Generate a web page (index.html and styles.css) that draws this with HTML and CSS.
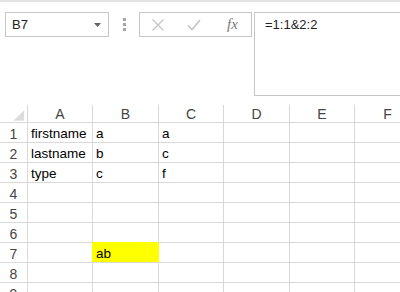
FILE: index.html
```html
<!DOCTYPE html>
<html>
<head>
<meta charset="utf-8">
<link rel="stylesheet" href="styles.css">
</head>
<body>
<div class="topband"></div>
<div class="toolbar">
  <div class="namebox">
    <span class="nb-text">B7</span>
    <svg class="nb-arrow" width="7" height="4" viewBox="0 0 7 4"><polygon points="0,0 7,0 3.5,4" fill="#666"/></svg>
  </div>
  <div class="dots">
    <span class="dot"></span><span class="dot"></span><span class="dot"></span>
  </div>
  <div class="fxbox">
    <svg class="ico" width="14" height="14" viewBox="0 0 14 14"><path d="M1.5 1.5 L12.5 12.5 M12.5 1.5 L1.5 12.5" stroke="#c4c4c4" stroke-width="1.3" fill="none"/></svg>
    <svg class="ico" width="14" height="14" viewBox="0 0 14 14"><path d="M1 7.5 L5 11.5 L13 2" stroke="#c4c4c4" stroke-width="1.6" fill="none"/></svg>
    <span class="fx">fx</span>
  </div>
  <div class="formula">=1:1&amp;2:2</div>
</div>
<div class="sheet">
  <div class="hd corner"><svg width="28" height="17" viewBox="0 0 28 17"><polygon points="25,5 25,16 14,16" fill="#dcdcdc"/></svg></div>
  <div class="hd">A</div><div class="hd">B</div><div class="hd">C</div><div class="hd">D</div><div class="hd">E</div><div class="hd">F</div>

  <div class="rh">1</div><div class="c">firstname</div><div class="c">a</div><div class="c">a</div><div class="c"></div><div class="c"></div><div class="c"></div>
  <div class="rh">2</div><div class="c">lastname</div><div class="c">b</div><div class="c">c</div><div class="c"></div><div class="c"></div><div class="c"></div>
  <div class="rh">3</div><div class="c">type</div><div class="c">c</div><div class="c">f</div><div class="c"></div><div class="c"></div><div class="c"></div>
  <div class="rh">4</div><div class="c"></div><div class="c"></div><div class="c"></div><div class="c"></div><div class="c"></div><div class="c"></div>
  <div class="rh">5</div><div class="c"></div><div class="c"></div><div class="c"></div><div class="c"></div><div class="c"></div><div class="c"></div>
  <div class="rh">6</div><div class="c"></div><div class="c"></div><div class="c"></div><div class="c"></div><div class="c"></div><div class="c"></div>
  <div class="rh">7</div><div class="c"></div><div class="c yellow">ab</div><div class="c"></div><div class="c"></div><div class="c"></div><div class="c"></div>
  <div class="rh">8</div><div class="c"></div><div class="c"></div><div class="c"></div><div class="c"></div><div class="c"></div><div class="c"></div>
  <div class="rh">9</div><div class="c"></div><div class="c"></div><div class="c"></div><div class="c"></div><div class="c"></div><div class="c"></div>
</div>
</body>
</html>
```
FILE: styles.css
```css
html, body {
  margin: 0;
  padding: 0;
  background: #fff;
  width: 400px;
  height: 292px;
  overflow: hidden;
  font-family: "Liberation Sans", Arial, sans-serif;
}
.topband {
  height: 2px;
  background: #e3e3e3;
}
.toolbar {
  display: flex;
  align-items: flex-start;
  padding-top: 10px;
  height: 93px;
  box-sizing: border-box;
  margin-bottom: 10px;
}
.namebox {
  margin-left: 5px;
  width: 104px;
  height: 25px;
  box-sizing: border-box;
  border: 1px solid #c6c6c6;
  display: flex;
  align-items: center;
  justify-content: space-between;
  padding: 0 7px 0 6px;
  font-size: 13px;
  color: #222;
}
.dots {
  width: 30px;
  height: 25px;
  display: flex;
  flex-direction: column;
  align-items: center;
  justify-content: center;
  gap: 2px;
}
.dot {
  width: 3px;
  height: 3px;
  background: #a6a6a6;
}
.fxbox {
  width: 113px;
  height: 25px;
  box-sizing: border-box;
  border: 1px solid #c6c6c6;
  display: flex;
  align-items: center;
  padding-left: 11px;
}
.ico {
  margin-right: 22px;
}
.fx {
  font-family: "Liberation Serif", serif;
  font-style: italic;
  font-size: 15px;
  color: #777;
  margin-left: 4px;
}
.formula {
  margin-left: 2px;
  flex: 1;
  margin-right: -20px;
  height: 84px;
  box-sizing: border-box;
  border: 1px solid #c6c6c6;
  padding: 4px 0 0 10px;
  font-size: 13px;
  color: #222;
}
.sheet {
  display: grid;
  grid-template-columns: 28px 65px 66px 65px 66px 65px 66px;
  grid-template-rows: 18px repeat(9, 20px);
  font-size: 13.5px;
}
.sheet > div {
  box-sizing: border-box;
  border-right: 1px solid #d9d9d9;
  border-bottom: 1px solid #d9d9d9;
}
.hd {
  display: flex;
  align-items: center;
  justify-content: center;
  color: #444;
  font-size: 14px;
  padding-top: 1px;
}
.corner {
  padding: 0 !important;
}
.corner svg {
  display: block;
}
.rh {
  display: flex;
  align-items: center;
  justify-content: center;
  color: #444;
  font-size: 14px;
  padding-top: 2px;
}
.c {
  display: flex;
  align-items: center;
  padding: 2px 0 0 3px;
  color: #000;
  white-space: nowrap;
}
.yellow {
  background: #ffff00;
  border-right-color: #ffff00 !important;
  box-shadow: -1px -1px 0 #ffff00;
}
```
